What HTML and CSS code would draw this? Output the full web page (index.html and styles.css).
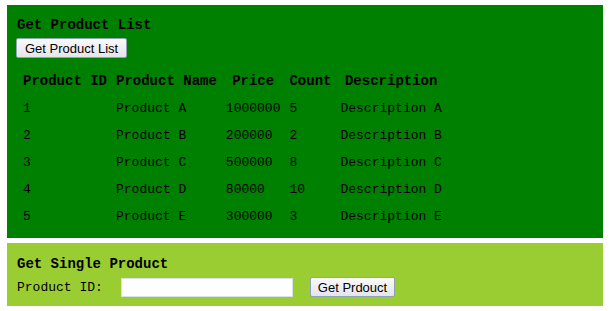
FILE: index.html
```html
<!DOCTYPE html>
<html lang="en">
<head>
    <meta charset="UTF-8">
    <title>Products</title>
    <link rel="stylesheet" href="styles.css">
</head>
<body>
    <div class="panel list-panel">
        <div class="panel-title">Get Product List</div>
        <button class="btn">Get Product List</button>
        <table class="products">
            <tr>
                <th>Product ID</th>
                <th>Product Name</th>
                <th>Price</th>
                <th>Count</th>
                <th>Description</th>
            </tr>
            <tr><td>1</td><td>Product A</td><td>1000000</td><td>5</td><td>Description A</td></tr>
            <tr><td>2</td><td>Product B</td><td>200000</td><td>2</td><td>Description B</td></tr>
            <tr><td>3</td><td>Product C</td><td>500000</td><td>8</td><td>Description C</td></tr>
            <tr><td>4</td><td>Product D</td><td>80000</td><td>10</td><td>Description D</td></tr>
            <tr><td>5</td><td>Product E</td><td>300000</td><td>3</td><td>Description E</td></tr>
        </table>
    </div>
    <div class="panel single-panel">
        <div class="panel-title">Get Single Product</div>
        <div class="search-row">
            <label for="product-id">Product ID:</label>
            <input type="text" id="product-id">
            <button class="btn">Get Prdouct</button>
        </div>
    </div>
</body>
</html>
```
FILE: styles.css
```css
body {
    margin: 5px 9px 5px 7px;
    font-family: "Liberation Mono", "DejaVu Sans Mono", monospace;
    font-size: 13px;
    color: #000;
}

.panel {
    padding: 11px 10px 8px 10px;
}

.list-panel {
    background: #008000;
    padding-bottom: 7px;
}

.single-panel {
    background: #9acd32;
    margin-top: 5px;
    padding-top: 12px;
    padding-bottom: 9px;
}

.panel-title {
    font-size: 14px;
    font-weight: bold;
    line-height: 18px;
}

.btn {
    font-family: "Liberation Sans", Arial, sans-serif;
    font-size: 13px;
    height: 20px;
    padding: 0 8px;
    background: linear-gradient(#fafafa, #e4e4ec);
    border: 1px solid #8fa3b8;
    border-radius: 2px;
    color: #000;
}

.list-panel .btn {
    display: block;
    margin: 4px 0 0 -1px;
}

.products {
    border-spacing: 3px 2px;
    margin-top: 9px;
}

.products th {
    font-size: 14px;
    font-weight: bold;
    line-height: 15px;
    padding: 5px 3px;
    text-align: center;
}

.products td {
    line-height: 15px;
    padding: 5px 3px;
    white-space: nowrap;
}

.search-row {
    display: flex;
    align-items: center;
    margin-top: 4px;
    height: 20px;
}

.search-row label {
    margin-right: 18px;
}

.search-row input {
    width: 166px;
    height: 15px;
    border: 1px solid #d8e0e8;
    padding: 1px 2px;
    margin-right: 17px;
    font-family: inherit;
}

.single-panel .btn {
    padding: 0 7px;
}
```
